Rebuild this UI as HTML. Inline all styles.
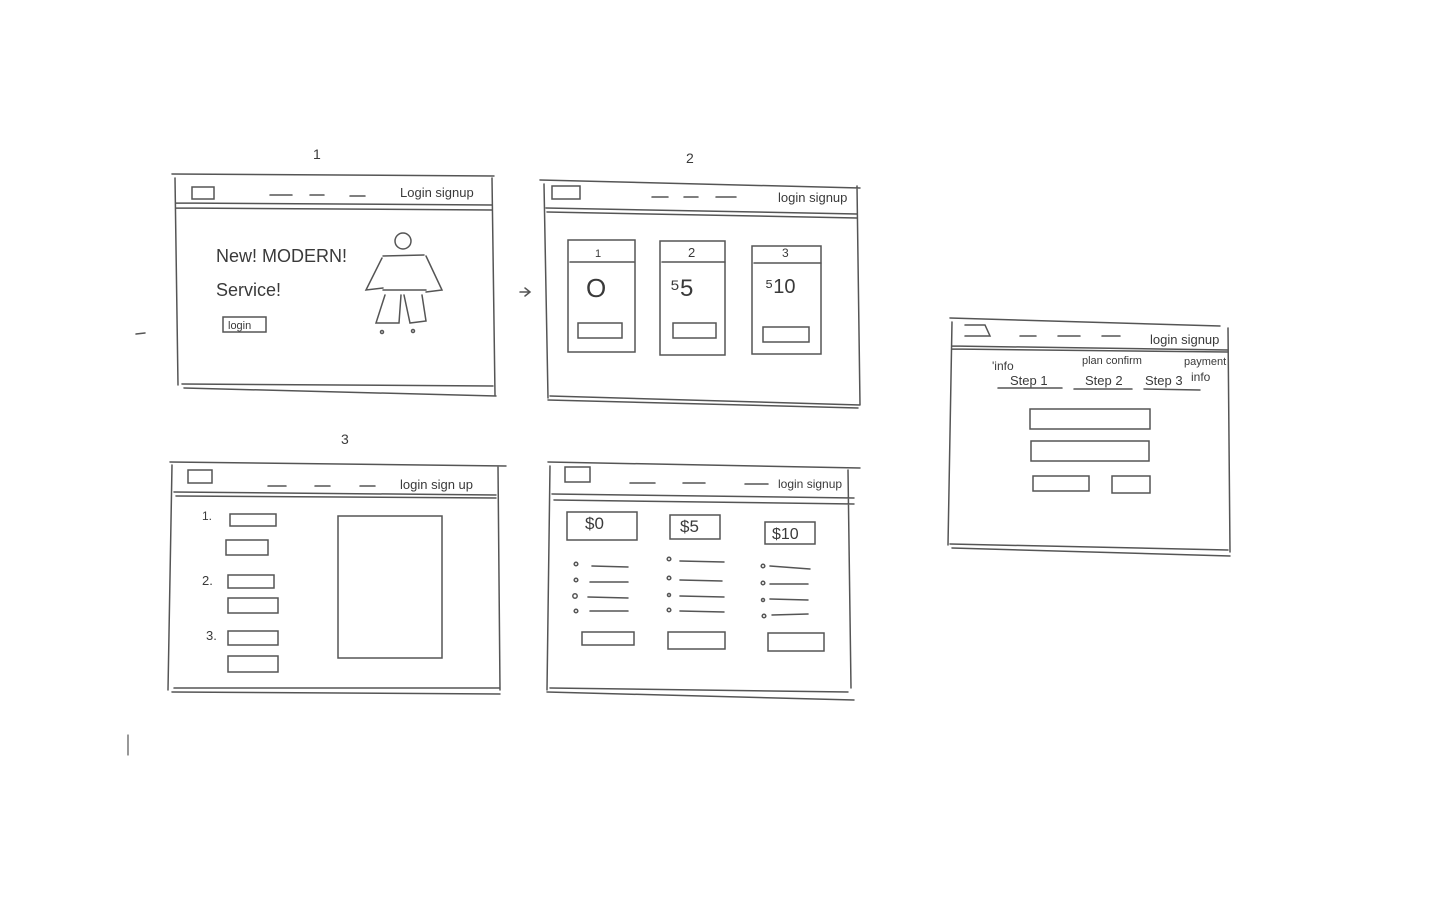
<!DOCTYPE html>
<html><head><meta charset="utf-8"><style>
html,body{margin:0;padding:0;background:#fff;width:1440px;height:900px;overflow:hidden}
svg{display:block}
text{font-family:"Liberation Sans",sans-serif;fill:#3a3a3a}
</style></head><body>
<svg width="1440" height="900" viewBox="0 0 1440 900" fill="none" stroke="#555" stroke-width="1.5" stroke-linecap="round">
<!-- frame 1 -->
<text x="313" y="159" font-size="14" stroke="none">1</text>
<path d="M172 174 L494 176 M175 178 L178 385 M182 384 L493 386 M184 388 L496 396 M492 178 L495 395 M176 203 L492 205 M176 208 L492 210"/>
<rect x="192" y="187" width="22" height="12"/>
<path d="M270 195 L292 195 M310 195 L324 195 M350 196 L365 196"/>
<text x="400" y="197" font-size="13" stroke="none">Login signup</text>
<text x="216" y="262" font-size="18" stroke="none">New! MODERN!</text>
<text x="216" y="296" font-size="18" stroke="none">Service!</text>
<rect x="223" y="317" width="43" height="15"/>
<text x="228" y="329" font-size="11" stroke="none">login</text>
<circle cx="403" cy="241" r="8"/>
<path d="M383 256 L424 255 M382 258 L366 290 L383 288 M426 256 L442 290 L426 292 M383 290 L426 290 M385 295 L376 323 L399 323 L401 295 M404 295 L410 323 L426 321 L422 295"/>
<circle cx="382" cy="332" r="1.5"/><circle cx="413" cy="331" r="1.5"/>
<path d="M136 334 L145 333 M520 292 L530 292 M525 288 L530 292 L525 296"/>
<!-- frame 2 -->
<text x="686" y="163" font-size="14" stroke="none">2</text>
<path d="M540 180 L860 188 M544 184 L548 398 M550 396 L860 405 M548 400 L858 408 M857 186 L860 405 M546 208 L857 214 M547 212 L857 218"/>
<rect x="552" y="186" width="28" height="13"/>
<path d="M652 197 L668 197 M684 197 L698 197 M716 197 L736 197"/>
<text x="778" y="202" font-size="13" stroke="none">login signup</text>
<rect x="568" y="240" width="67" height="112"/>
<path d="M570 262 L634 262"/>
<text x="595" y="257" font-size="11" stroke="none">1</text>
<text x="586" y="297" font-size="26" stroke="none">O</text>
<rect x="578" y="323" width="44" height="15"/>
<rect x="660" y="241" width="65" height="114"/>
<path d="M662 262 L725 262"/>
<text x="688" y="257" font-size="13" stroke="none">2</text>
<text x="670" y="296" font-size="24" stroke="none">⁵5</text>
<rect x="673" y="323" width="43" height="15"/>
<rect x="752" y="246" width="69" height="108"/>
<path d="M754 263 L821 263"/>
<text x="782" y="257" font-size="12" stroke="none">3</text>
<text x="765" y="293" font-size="20" stroke="none">⁵10</text>
<rect x="763" y="327" width="46" height="15"/>
<!-- frame 3 -->
<text x="341" y="444" font-size="14" stroke="none">3</text>
<path d="M170 462 L506 466 M172 465 L168 690 M174 688 L500 688 M172 692 L500 694 M498 466 L500 690 M174 492 L496 495 M176 496 L496 498"/>
<rect x="188" y="470" width="24" height="13"/>
<path d="M268 486 L286 486 M315 486 L330 486 M360 486 L375 486"/>
<text x="400" y="489" font-size="13" stroke="none">login sign up</text>
<text x="202" y="520" font-size="12" stroke="none">1.</text>
<rect x="230" y="514" width="46" height="12"/>
<rect x="226" y="540" width="42" height="15"/>
<text x="202" y="585" font-size="13" stroke="none">2.</text>
<rect x="228" y="575" width="46" height="13"/>
<rect x="228" y="598" width="50" height="15"/>
<text x="206" y="640" font-size="13" stroke="none">3.</text>
<rect x="228" y="631" width="50" height="14"/>
<rect x="228" y="656" width="50" height="16"/>
<rect x="338" y="516" width="104" height="142"/>
<!-- frame 4 -->
<path d="M548 462 L860 468 M550 466 L547 690 M550 688 L848 692 M547 692 L854 700 M848 470 L851 688 M552 494 L854 498 M554 500 L854 504"/>
<rect x="565" y="467" width="25" height="15"/>
<path d="M630 483 L655 483 M683 483 L705 483 M745 484 L768 484"/>
<text x="778" y="488" font-size="12" stroke="none">login signup</text>
<rect x="567" y="512" width="70" height="28"/><text x="585" y="529" font-size="17" stroke="none">$0</text>
<rect x="670" y="515" width="50" height="24"/><text x="680" y="532" font-size="17" stroke="none">$5</text>
<rect x="765" y="522" width="50" height="22"/><text x="772" y="539" font-size="16" stroke="none">$10</text>
<g>
<circle cx="576" cy="564" r="1.8"/><path d="M592 566 L628 567"/>
<circle cx="576" cy="580" r="1.8"/><path d="M590 582 L628 582"/>
<circle cx="575" cy="596" r="2.2"/><path d="M588 597 L628 598"/>
<circle cx="576" cy="611" r="1.8"/><path d="M590 611 L628 611"/>
<circle cx="669" cy="559" r="1.8"/><path d="M680 561 L724 562"/>
<circle cx="669" cy="578" r="1.8"/><path d="M680 580 L722 581"/>
<circle cx="669" cy="595" r="1.5"/><path d="M680 596 L724 597"/>
<circle cx="669" cy="610" r="1.8"/><path d="M680 611 L724 612"/>
<circle cx="763" cy="566" r="1.8"/><path d="M770 566 L810 569"/>
<circle cx="763" cy="583" r="1.8"/><path d="M770 584 L808 584"/>
<circle cx="763" cy="600" r="1.5"/><path d="M770 599 L808 600"/>
<circle cx="764" cy="616" r="1.8"/><path d="M772 615 L808 614"/>
</g>
<rect x="582" y="632" width="52" height="13"/>
<rect x="668" y="632" width="57" height="17"/>
<rect x="768" y="633" width="56" height="18"/>
<!-- frame 5 -->
<path d="M950 318 L1220 326 M952 322 L948 545 M950 544 L1228 550 M952 548 L1230 556 M1228 328 L1230 552 M952 346 L1228 350 M952 349 L1228 352"/>
<path d="M965 325 L985 325 L990 336 L965 336"/>
<path d="M1020 336 L1036 336 M1058 336 L1080 336 M1102 336 L1120 336"/>
<text x="1150" y="344" font-size="13" stroke="none">login signup</text>
<text x="992" y="370" font-size="12" stroke="none">'info</text>
<text x="1082" y="364" font-size="11" stroke="none">plan confirm</text>
<text x="1184" y="365" font-size="11" stroke="none">payment</text>
<text x="1191" y="381" font-size="12" stroke="none">info</text>
<text x="1010" y="385" font-size="13" stroke="none">Step 1</text>
<text x="1085" y="385" font-size="13" stroke="none">Step 2</text>
<text x="1145" y="385" font-size="13" stroke="none">Step 3</text>
<path d="M998 388 L1062 388 M1074 389 L1132 389 M1144 389 L1200 390"/>
<rect x="1030" y="409" width="120" height="20"/>
<rect x="1031" y="441" width="118" height="20"/>
<rect x="1033" y="476" width="56" height="15"/>
<rect x="1112" y="476" width="38" height="17"/>
<path d="M128 735 L128 755" stroke-width="1.2"/>
</svg>
</body></html>
